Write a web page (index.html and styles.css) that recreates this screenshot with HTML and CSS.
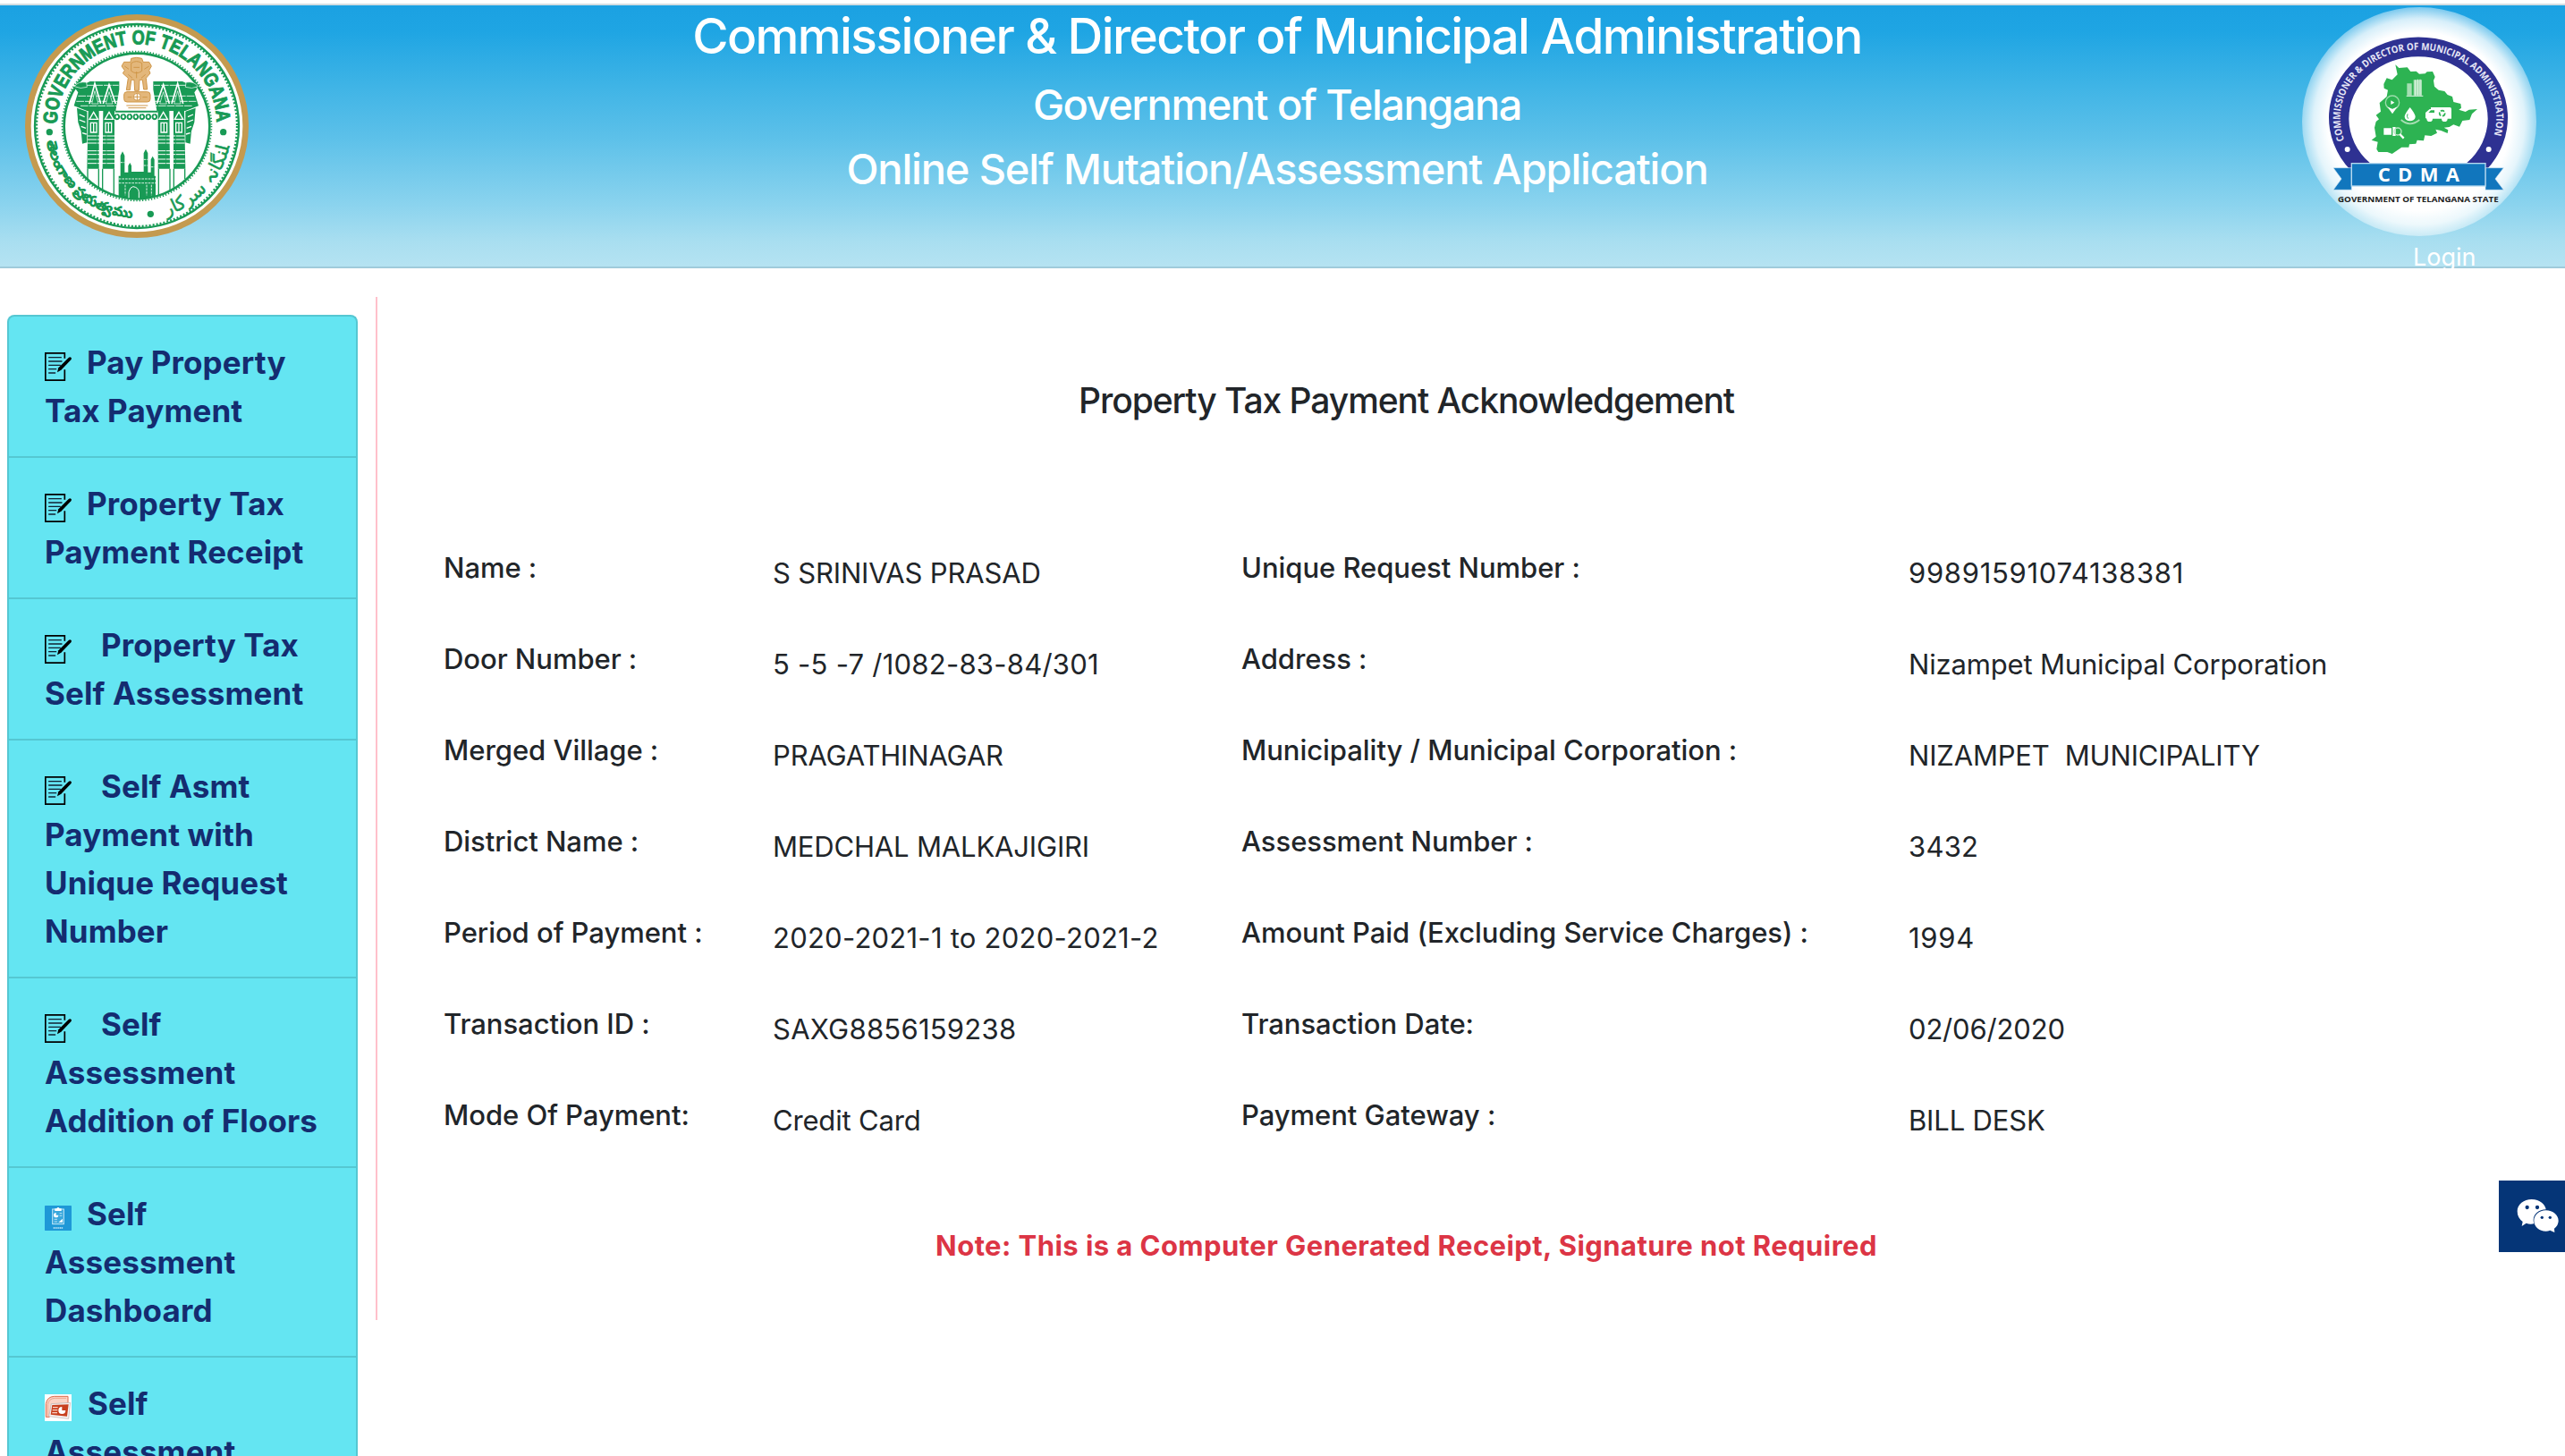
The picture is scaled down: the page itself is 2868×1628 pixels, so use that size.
FILE: index.html
```html
<!DOCTYPE html>
<html lang="en">
<head>
<meta charset="utf-8">
<title>Property Tax Payment Acknowledgement</title>
<link rel="stylesheet" href="styles.css">
</head>
<body>
<svg width="0" height="0" class="sprite" aria-hidden="true">
  <symbol id="doc" viewBox="0 0 90 96">
    <path d="M67 20V2.500H2.500V93.500H67V58" fill="none" stroke="#000" stroke-width="5"/>
    <path d="M14 17H55M14 30H57M14 43H52M14 56H38M14 69H35" stroke="#123" stroke-width="4" stroke-linecap="round"/>
    <path d="M42 67L46 52L80 18Q85 14 89 18Q91 21 88 25L55 59Z" fill="#000"/>
  </symbol>
</svg>

<header class="banner">
  <svg class="seal" viewBox="84 48 750 750">
    <circle cx="459" cy="423" r="365" fill="#fff" stroke="#c49a4f" stroke-width="20"/>
    <circle cx="459" cy="423" r="342" fill="none" stroke="#189a55" stroke-width="7"/>
    <circle cx="459" cy="423" r="336" fill="none" stroke="#189a55" stroke-width="7" stroke-dasharray="6 6"/>
    <circle cx="459" cy="423" r="244" fill="none" stroke="#189a55" stroke-width="8"/>
    <circle cx="459" cy="423" r="250" fill="none" stroke="#189a55" stroke-width="6" stroke-dasharray="4 6"/>
    <path id="sealTop" d="M191 416A268 268 0 0 1 727 416" fill="none"/>
    <path id="sealLeft" d="M158 475A306 306 0 0 0 468 729" fill="none"/>
    <path id="sealRight" d="M558 724A317 317 0 0 0 770 490" fill="none"/>
    <text class="seal-en"><textPath href="#sealTop" textLength="836" lengthAdjust="spacingAndGlyphs">GOVERNMENT OF TELANGANA</textPath></text>
    <text class="seal-te"><textPath href="#sealLeft" textLength="412" lengthAdjust="spacingAndGlyphs">తెలంగాణ ప్రభుత్వము</textPath></text>
    <text class="seal-ur"><textPath href="#sealRight">تلنگانہ سرکار</textPath></text>
    <g fill="#189a55"><circle cx="166" cy="443" r="11"/><circle cx="749" cy="443" r="11"/><circle cx="505" cy="718" r="11"/></g>
    <g id="wing">
      <path d="M302 273H400V300L388 372H292L248 355L262 310L252 296Z" fill="#189a55"/>
      <path d="M290 286H398M262 322H398M256 340H398M270 355H392" stroke="#fff" stroke-width="2.500" stroke-dasharray="26 3"/>
      <path d="M300 348L318 280L338 348M346 348L366 284L388 348" fill="none" stroke="#fff" stroke-width="5"/>
      <path d="M308 348L318 305L330 348ZM355 348L366 308L378 348Z" fill="#189a55" stroke="#fff" stroke-width="2"/>
      <path d="M250 290Q262 272 290 276L292 292Q270 300 250 290Z" fill="#189a55" stroke="#fff" stroke-width="2"/>
      <path d="M258 362L292 374V478L276 482L272 440L262 410Z" fill="#189a55"/>
      <path d="M266 384L284 392M266 402L286 410M272 424L288 430M276 446L290 450" stroke="#fff" stroke-width="4"/>
      <path d="M296 372H332V566H292ZM346 372H384V566H344Z" fill="#189a55"/>
      <path d="M300 400L314 376L328 400ZM352 400L366 376L380 400Z" fill="#189a55" stroke="#fff" stroke-width="4"/>
      <path d="M304 412V444H324V412ZM354 412V444H374V412ZM314 412V444M364 412V444" fill="none" stroke="#fff" stroke-width="4"/>
      <path d="M294 456H384M294 468H384M294 480H384M294 506H384M294 518H384M294 534H384M294 548H384" stroke="#fff" stroke-width="3" stroke-dasharray="30 2"/>
      <path d="M294 566V600M331 566V632M344 566V640M382 566V655" stroke="#189a55" stroke-width="4"/>
    </g>
    <use href="#wing" transform="translate(914 0) scale(-1 1)"/>
    <path d="M386 374H530M392 384a7 8 0 1 0 1 0M413 384a7 8 0 1 0 1 0M434 384a7 8 0 1 0 1 0M455 384a7 8 0 1 0 1 0M476 384a7 8 0 1 0 1 0M497 384a7 8 0 1 0 1 0M518 384a7 8 0 1 0 1 0" fill="none" stroke="#189a55" stroke-width="6"/>
    <path d="M398 658V590H404V522L411 508L418 522V578H430V556L436 546L441 556V576H482V514L489 500L496 514V578H506V535L512 524L518 535V590H522V658Q460 680 398 658Z" fill="#189a55"/>
    <path d="M398 600H522M398 614H522M404 545H418M482 535H496M482 555H496M506 560H518M420 620V655M492 620V655M508 620V655" stroke="#fff" stroke-width="2.500" stroke-dasharray="8 3"/>
    <path d="M432 664V644Q436 628 446 626Q464 628 466 644V664" fill="none" stroke="#fff" stroke-width="3"/>
    <path d="M412 340L424 306L416 262L406 226L420 196L458 188L498 196L512 226L500 262L496 306L508 340L488 368H430Z" fill="#fff"/>
    <g fill="#e3b77b" stroke="#cf9648" stroke-width="3">
      <path d="M440 196Q458 190 476 196L480 208H500L508 222L500 236L504 246L490 262L494 300H482L478 268H468L466 304H452L450 268H440L436 302H424L430 262L412 246L418 236L408 222L416 208H438Z"/>
      <path d="M440 212Q458 200 476 212V238Q458 252 440 238ZM418 222L432 232M500 222L484 232M430 250L444 262M488 250L474 262M448 226H468M458 240V262" fill="none"/>
      <rect x="416" y="308" width="88" height="34" rx="10"/>
      <circle cx="460" cy="325" r="12" fill="#fff"/><path d="M424 354H496M430 362H490M460 314V336M449 325H471M428 326H442M478 326H494" fill="none"/>
    </g>
  </svg>

  <div class="titles">
    <h1>Commissioner &amp; Director of Municipal Administration</h1>
    <h2 class="gov">Government of Telangana</h2>
    <h2 class="app">Online Self Mutation/Assessment Application</h2>
  </div>

  <div class="right">
    <svg class="cdma" viewBox="102 24 786 768">
      <defs>
        <radialGradient id="glow"><stop offset="0" stop-color="#fff"/><stop offset=".78" stop-color="#fff"/><stop offset=".9" stop-color="#fff" stop-opacity=".82"/><stop offset="1" stop-color="#fff" stop-opacity=".42"/></radialGradient>
      </defs>
      <ellipse cx="495" cy="408" rx="393" ry="384" fill="url(#glow)"/>
      <path d="M265 571A300 270 0 1 1 719 571L654 547A233 208 0 1 0 330 547Z" fill="#2e3192"/>
      <path id="ringText" d="M244 470A262 229 0 1 1 740 470" fill="none"/>
      <text class="ring-text"><textPath href="#ringText" textLength="905" lengthAdjust="spacingAndGlyphs">COMMISSIONER &amp; DIRECTOR OF MUNICIPAL ADMINISTRATION</textPath></text>
      <circle cx="254" cy="501" r="9" fill="#fff"/><circle cx="728" cy="501" r="9" fill="#fff"/>
      <path d="M415 217L427 228L455 226L466 240L485 239L495 248L515 247L521 241L540 240L548 258L543 270L546 290L560 302L580 306L590 318L606 324L610 342L634 348L636 362L628 368L650 375L662 368L690 366L672 382L664 402L640 405L630 425L610 418L596 426L578 428L592 436L590 447L568 438L550 434L555 446L535 456L514 454L510 472L488 470L484 482L462 484L460 494L436 494L404 516L388 510H358L352 500L356 476L335 470L350 458L345 428L350 408L360 400L350 386L366 374L362 345L386 324L390 302L377 296L376 282L386 262L404 268L422 250Z" fill="#2db352"/>
      <path d="M454 280H470V320H454ZM476 268H504V320H476Z" fill="#a6deb3"/><path d="M452 322H508M482 268V320M490 266V320M498 266V320" stroke="#e3f5e7" stroke-width="3"/>
      <circle cx="405" cy="344" r="23" fill="none" stroke="#9cdcab" stroke-width="4"/><path d="M388 358L405 382L422 358L405 366ZM400 337L412 344L400 351Z" fill="#fff"/>
      <path d="M464 360Q482 382 482 392A18 14 0 0 1 446 392Q446 382 464 360Z" fill="#fff"/><path d="M434 402Q464 428 496 402" fill="none" stroke="#a6deb3" stroke-width="5"/><path d="M456 382Q452 392 458 398" fill="none" stroke="#2db352" stroke-width="3"/>
      <path d="M516 396V378L530 366H534V360H598Q603 360 603 366V398H590A10 10 0 0 1 570 398H540A10 10 0 0 1 520 398Z" fill="#fff"/><path d="M526 378L534 370H546V378Z" fill="#2db352"/><circle cx="572" cy="380" r="9" fill="none" stroke="#2db352" stroke-width="5" stroke-dasharray="13 5"/>
      <path d="M376 430H402V452H376ZM406 426H416V456H406Z" fill="#fff"/><circle cx="423" cy="441" r="12" fill="none" stroke="#b9e6c3" stroke-width="4"/><path d="M430 450L443 464" stroke="#fff" stroke-width="7"/>
      <path d="M207 563H268V637H207L234 600ZM778 563H717V637H778L750 600Z" fill="#1176bd" stroke="#cfe6f5" stroke-width="2"/>
      <rect x="268" y="548" width="449" height="76" fill="#1176bd" stroke="#b8daf0" stroke-width="4"/>
      <text class="cdma-name" x="356" y="610" textLength="274">CDMA</text>
      <text class="cdma-sub" x="222" y="677" textLength="539" lengthAdjust="spacingAndGlyphs">GOVERNMENT OF TELANGANA STATE</text>
    </svg>
    <a class="login">Login</a>
  </div>
</header>

<div class="page">
  <nav class="menu">
    <a class="item"><svg class="icon"><use href="#doc"/></svg>Pay Property<br>Tax Payment</a>
    <a class="item"><svg class="icon"><use href="#doc"/></svg>Property Tax<br>Payment Receipt</a>
    <a class="item"><svg class="icon wide"><use href="#doc"/></svg>Property Tax<br>Self Assessment</a>
    <a class="item"><svg class="icon wide"><use href="#doc"/></svg>Self Asmt<br>Payment with<br>Unique Request<br>Number</a>
    <a class="item"><svg class="icon wide"><use href="#doc"/></svg>Self<br>Assessment<br>Addition of Floors</a>
    <a class="item"><svg class="icon report" viewBox="0 0 90 84"><rect width="90" height="84" rx="2" fill="#1e98d7"/><rect x="26" y="12" width="38" height="50" fill="#3aa8dd" stroke="#c4e7f7" stroke-width="3"/><path d="M34 18V10H40Q45 2 50 10H56V18Z" fill="#fff"/><path d="M38 24V32H46A8 8 0 1 1 38 24Z" fill="#fff"/><path d="M50 26H58M50 34H58M32 46H42M32 54H42" stroke="#b7e1f4" stroke-width="3"/><path d="M46 56L60 44V56Z" fill="#fff"/><path d="M29 75H62" stroke="#9fd5ef" stroke-width="6" stroke-dasharray="4 1.500"/></svg>Self<br>Assessment<br>Dashboard</a>
    <a class="item last"><svg class="icon slides" viewBox="0 0 90 90"><rect width="90" height="90" fill="#fff"/><path d="M4 76V32Q8 8 32 7H78V30L24 36L16 76Z" fill="#fbd3c5" stroke="#dd6a4b" stroke-width="3"/><path d="M10 74V34Q14 14 34 13H72" fill="none" stroke="#f0a58f" stroke-width="3"/><path d="M22 32L86 28L80 82L14 74Z" fill="#f6f2f1" stroke="#b9b1af" stroke-width="2"/><path d="M25 36L80 34L75 74L20 68Z" fill="#c8401f"/><path d="M27 44H44M26 53H43M25 62H42" stroke="#fbd3c5" stroke-width="4"/><path d="M58 42V54H70A12 12 0 1 1 58 42Z" fill="#fff"/></svg>Self<br>Assessment</a>
  </nav>

  <main class="content">
    <h3 class="heading">Property Tax Payment Acknowledgement</h3>
    <div class="details">
      <label>Name :</label><span>S SRINIVAS PRASAD</span><label>Unique Request Number :</label><span class="num long">99891591074138381</span>
      <label>Door Number :</label><span class="num">5 -5 -7 /1082-83-84/301</span><label>Address :</label><span>Nizampet Municipal Corporation</span>
      <label>Merged Village :</label><span>PRAGATHINAGAR</span><label>Municipality / Municipal Corporation :</label><span>NIZAMPET&nbsp; MUNICIPALITY</span>
      <label>District Name :</label><span>MEDCHAL MALKAJIGIRI</span><label>Assessment Number :</label><span class="num">3432</span>
      <label>Period of Payment :</label><span class="num">2020-2021-1 to 2020-2021-2</span><label>Amount Paid (Excluding Service Charges) :</label><span class="num long">1994</span>
      <label>Transaction ID :</label><span class="num">SAXG8856159238</span><label>Transaction Date:</label><span>02/06/2020</span>
      <label>Mode Of Payment:</label><span>Credit Card</span><label>Payment Gateway :</label><span>BILL DESK</span>
    </div>
    <p class="note">Note: This is a Computer Generated Receipt, Signature not Required</p>
  </main>
</div>

<a class="chat">
  <svg viewBox="0 0 222 240">
    <path d="M110 63C138 63 157 82 158 97C134 97 116 114 116 132Q116 140 118 145Q104 148 92 143L77 153L80 138Q62 125 62 103C62 80 84 63 110 63Z" fill="#fff"/>
    <circle cx="95" cy="90" r="6.500" fill="#053577"/><circle cx="129" cy="90" r="6.500" fill="#053577"/>
    <path d="M158 100C182 100 200 116 200 135Q200 150 186 161L187 174L172 167Q165 170 158 170C135 170 118 154 118 135C118 116 135 100 158 100Z" fill="#fff"/>
    <circle cx="145" cy="124" r="5" fill="#053577"/><circle cx="172" cy="124" r="5" fill="#053577"/>
  </svg>
</a>
</body>
</html>
```
FILE: styles.css
```css
* { box-sizing: border-box; }

html, body { height: 100%; }

body {
  margin: 0;
  padding-top: 4px;
  overflow: hidden;
  background: #fff;
  color: #212529;
  font: 400 31px/48px Inter, "Noto Sans", sans-serif;
}

.sprite { position: absolute; }

h1, h2, h3, p { margin: 0; font-weight: 500; }

/* Banner */
.banner {
  display: grid;
  grid-template-columns: 322px 2212px 334px;
  height: 296px;
  border-top: 2px solid #d3dde2;
  border-bottom: 2px solid #9fcbdb;
  background: linear-gradient(#1ba1e2 0%, #1fa5e3 10%, #3fb4e6 31%, #5bc0e9 50%, #8ad3ee 76%, #a8def0 90%, #b5e3f2 100%);
  color: #fff;
}

.seal { width: 250px; height: 250px; margin: 10px 0 0 28px; }
.seal-en { fill: #189a55; stroke: #189a55; stroke-width: 3px; font: 700 66px "Liberation Sans", sans-serif; }
.seal-te { fill: #189a55; stroke: #189a55; stroke-width: 1.5px; font: 700 44px "Noto Sans", sans-serif; }
.seal-ur { fill: #189a55; stroke: #189a55; stroke-width: 1.5px; font: 400 62px "DejaVu Sans", sans-serif; }

.titles { padding-top: 1px; text-align: center; }
.titles h1 { font-size: 55px; line-height: 67px; letter-spacing: -1.6px; }
.titles h2 { margin-top: 14px; font-size: 47px; line-height: 58px; }
.titles .gov { letter-spacing: -1.5px; }
.titles .app { letter-spacing: -1.17px; }

.right { display: flex; flex-direction: column; padding: 2px 0 0 40px; }
.cdma { width: 262px; height: 256px; flex: none; }
.ring-text { fill: #e6e6f6; font: 700 33px "Open Sans", sans-serif; }
.cdma-name { fill: #fff; font: 700 66px "Open Sans", sans-serif; }
.cdma-sub { fill: #222; font: 700 27px "Open Sans", sans-serif; }
.login { margin: 4px 0 0 124px; font-size: 27px; line-height: 40px; }

/* Body */
.page { display: flex; align-items: flex-start; }

.menu {
  width: 392px;
  margin: 52px 20px 0 8px;
  border: 2px solid #55c7d2;
  border-bottom: 0;
  border-radius: 8px 8px 0 0;
  background: #64e5f2;
  color: #142c70;
  font-weight: 700;
  font-size: 35px;
  line-height: 54px;
  letter-spacing: .1px;
}
.item {
  display: block;
  padding: 24px 40px;
  border-bottom: 2px solid #55c7d2;
}
.item.last { height: 110px; padding-bottom: 0; border-bottom: 0; }
.icon { width: 30px; height: 32px; margin-right: 17px; vertical-align: -8px; }
.icon.wide { margin-right: 33px; }
.icon.report { height: 28px; vertical-align: -6px; }
.icon.slides { height: 30px; margin-right: 18px; vertical-align: -7px; }

.content {
  width: 2303px;
  height: 1144px;
  margin-top: 32px;
  padding-top: 92px;
  border-left: 2px solid #ffc0cb;
}
.heading { font-size: 39px; text-align: center; letter-spacing: -1.07px; }
.details {
  display: grid;
  grid-template-columns: 368px 524px 746px 1fr;
  grid-auto-rows: 102px;
  margin: 139px 0 0 74px;
}
.details label { font-weight: 500; letter-spacing: -.04px; }
.details span { padding-top: 6px; letter-spacing: -.17px; }
.details .num { letter-spacing: .25px; }
.details .long { letter-spacing: .7px; }
.note {
  margin-top: 44px;
  color: #dc3545;
  font-weight: 700;
  letter-spacing: .44px;
  text-align: center;
}

/* Chat tab pinned to the right edge */
.chat {
  position: fixed;
  top: 1320px;
  right: 0;
  width: 74px;
  height: 80px;
  background: #053577;
}
.chat svg { display: block; width: 74px; height: 80px; }
```
